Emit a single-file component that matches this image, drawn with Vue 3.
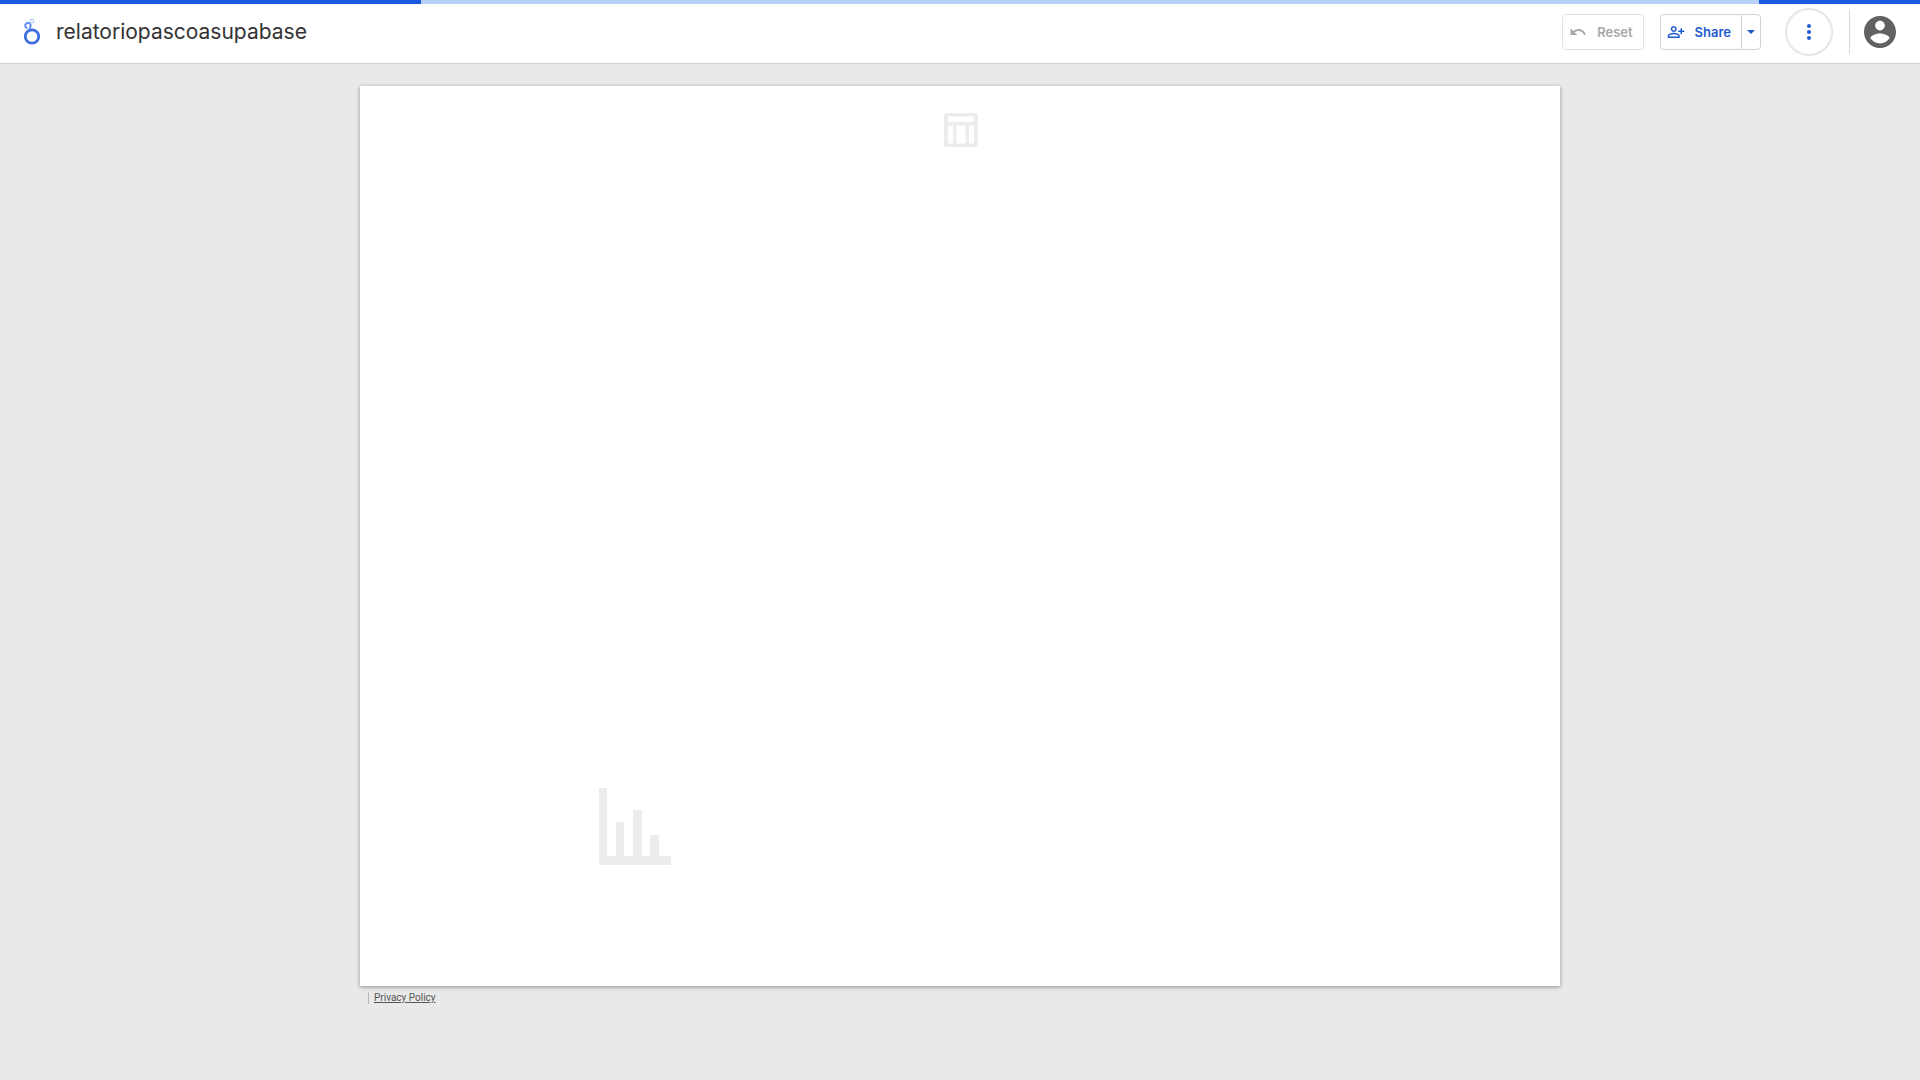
<template>
  <div class="viewer">
    <div class="progress" role="progressbar" aria-label="Loading">
      <span
        v-for="bar in bars"
        :key="bar.start"
        class="progress__bar"
        :style="{ left: bar.start + '%', width: bar.size + '%' }"
      ></span>
    </div>

    <header class="header">
      <a class="header__logo" href="#" aria-label="Home">
        <svg width="16" height="28" viewBox="0 0 16 28" fill="none">
          <circle cx="8" cy="18.5" r="6.7" stroke="#3f6fdd" stroke-width="2.8" />
          <path d="M3.6 10.2a2.7 2.7 0 1 1 2.6-1.2l-.4 2.2" stroke="#5b8def" stroke-width="1.9" />
          <circle cx="8" cy="3.2" r="1.8" stroke="#b4cdf8" stroke-width="1.2" />
        </svg>
      </a>
      <h1 class="header__title">{{ title }}</h1>

      <div class="header__actions">
        <button class="button button--reset" type="button" disabled>
          <svg width="18" height="18" viewBox="0 0 24 24" fill="currentColor" aria-hidden="true">
            <path d="M12.5 8c-2.65 0-5.05.99-6.9 2.6L2 7v9h9l-3.62-3.62c1.39-1.16 3.16-1.88 5.12-1.88 3.54 0 6.55 2.31 7.6 5.5l2.37-.78C21.08 11.03 17.15 8 12.5 8z" />
          </svg>
          <span>Reset</span>
        </button>

        <div class="split">
          <button class="button button--share" type="button">
            <svg width="18" height="18" viewBox="0 0 24 24" fill="currentColor" aria-hidden="true">
              <path d="M9 12c2.21 0 4-1.79 4-4s-1.79-4-4-4-4 1.79-4 4 1.79 4 4 4zm0-6c1.1 0 2 .9 2 2s-.9 2-2 2-2-.9-2-2 .9-2 2-2zm0 7c-2.67 0-8 1.34-8 4v3h16v-3c0-2.66-5.33-4-8-4zm6 5H3v-.99C3.2 16.29 6.3 15 9 15s5.8 1.29 6 2v1zm5-8V7h-2v3h-3v2h3v3h2v-3h3v-2h-3z" />
            </svg>
            <span>Share</span>
          </button>
          <button class="button button--arrow" type="button" aria-label="More share options">
            <svg width="8" height="4" viewBox="0 0 8 4" fill="currentColor"><path d="M0 0h8L4 4z" /></svg>
          </button>
        </div>

        <button class="more" type="button" aria-label="More options">
          <svg width="24" height="24" viewBox="0 0 24 24" fill="currentColor">
            <circle cx="12" cy="6" r="2" />
            <circle cx="12" cy="12" r="2" />
            <circle cx="12" cy="18" r="2" />
          </svg>
        </button>

        <div class="header__account">
          <button class="avatar" type="button" aria-label="Account">
            <svg width="32" height="32" viewBox="2 2 20 20" fill="currentColor">
              <path d="M12 2C6.48 2 2 6.48 2 12s4.48 10 10 10 10-4.48 10-10S17.52 2 12 2zm0 3c1.66 0 3 1.34 3 3s-1.34 3-3 3-3-1.34-3-3 1.34-3 3-3zm0 14.2c-2.5 0-4.71-1.28-6-3.22.03-1.99 4-3.08 6-3.08 1.99 0 5.97 1.09 6 3.08-1.29 1.94-3.5 3.22-6 3.22z" />
            </svg>
          </button>
        </div>
      </div>
    </header>

    <main class="report">
      <div class="canvas">
        <svg
          v-for="item in placeholders"
          :key="item.name"
          class="placeholder"
          :width="item.width"
          :height="item.height"
          :viewBox="`0 0 ${item.width} ${item.height}`"
          :style="{ left: item.x + '%', top: item.y + '%' }"
          aria-hidden="true"
        >
          <path fill-rule="evenodd" :d="item.path" />
        </svg>
      </div>
      <footer class="footer">
        <a class="footer__link" href="#">Privacy Policy</a>
      </footer>
    </main>
  </div>
</template>

<script setup>
const title = 'relatoriopascoasupabase'

// filled parts of the loading bar, in percent of its width
const bars = [
  { start: 0, size: 21.95 },
  { start: 91.6, size: 8.4 },
]

// charts that are still loading, x and y in percent of the canvas
const placeholders = [
  {
    name: 'table',
    x: 48.65,
    y: 2.95,
    width: 34,
    height: 34,
    path: 'M3 0h28a3 3 0 0 1 3 3v28a3 3 0 0 1-3 3H3a3 3 0 0 1-3-3V3a3 3 0 0 1 3-3zM4 3.5V9h26V3.5zM4 12.5v18h5v-18zM12.5 12.5v18h9v-18zM25 12.5v18h5v-18z',
  },
  {
    name: 'chart',
    x: 19.9,
    y: 78.05,
    width: 72,
    height: 77,
    path: 'M0 0h8v68h9V34h8v34h9V22h9v46h8V47h9v21h12v9H0z',
  },
]
</script>

<style>
body {
  background: #e9e9e9;
}
</style>

<style scoped>
.viewer {
  position: relative;
  min-height: 100vh;
  font-family: Roboto, "Liberation Sans", sans-serif;
}

.progress {
  position: absolute;
  top: 0;
  left: 0;
  right: 0;
  height: 4px;
  overflow: hidden;
  background: #b8d1f8;
}

.progress__bar {
  position: absolute;
  top: 0;
  bottom: 0;
  background: #175ae0;
}

.header {
  display: flex;
  align-items: center;
  height: 64px;
  padding: 0 24px;
  box-sizing: border-box;
  background: #fff;
  border-bottom: 1px solid #d0d0d0;
}

.header__logo {
  display: flex;
  margin-right: 16px;
}

.header__title {
  margin: 0;
  color: #333;
  font-family: Inter, Roboto, sans-serif;
  font-size: 21px;
  font-weight: 400;
  line-height: 28px;
}

.header__actions {
  display: flex;
  align-items: center;
  margin-left: auto;
}

.button {
  display: flex;
  align-items: center;
  gap: 10px;
  height: 36px;
  padding: 0 10px 0 6px;
  box-sizing: border-box;
  border: 1px solid #d0d2d6;
  border-radius: 4px;
  background: #fff;
  color: #1f5bd0;
  font-family: Inter, Roboto, sans-serif;
  font-size: 13px;
  font-weight: 600;
  line-height: 20px;
  cursor: pointer;
}

.button svg {
  flex-shrink: 0;
}

.button--reset {
  margin-right: 16px;
  border-color: #e2e2e2;
  color: #a8a8a8;
  cursor: default;
}

.split {
  display: flex;
  margin-right: 24px;
}

.button--share {
  border-right: 0;
  border-radius: 4px 0 0 4px;
}

.button--arrow {
  justify-content: center;
  width: 20px;
  padding: 0;
  border-radius: 0 4px 4px 0;
}

.more {
  display: flex;
  align-items: center;
  justify-content: center;
  width: 48px;
  height: 48px;
  padding: 0;
  border: 2px solid #e6e6e6;
  border-radius: 50%;
  background: #fff;
  color: #1f5bd0;
  cursor: pointer;
}

.header__account {
  display: flex;
  align-items: center;
  height: 45px;
  margin-left: 16px;
  padding-left: 14px;
  border-left: 1px solid #d8d8d8;
}

.avatar {
  display: flex;
  padding: 0;
  border: 0;
  border-radius: 50%;
  background: none;
  color: #616161;
  cursor: pointer;
}

.report {
  width: calc(100% - 48px);
  max-width: 1200px;
  margin: 0 auto;
  padding-top: 22px;
}

.canvas {
  position: relative;
  aspect-ratio: 4 / 3;
  background: #fff;
  box-shadow: 0 1px 4px rgba(0, 0, 0, 0.4);
}

.placeholder {
  position: absolute;
  fill: #ececec;
}

.footer {
  display: flex;
  padding: 6px 8px;
}

.footer__link {
  padding-left: 5px;
  border-left: 1px solid #b8b8b8;
  color: #555;
  font-size: 10px;
  line-height: 12px;
}
</style>
